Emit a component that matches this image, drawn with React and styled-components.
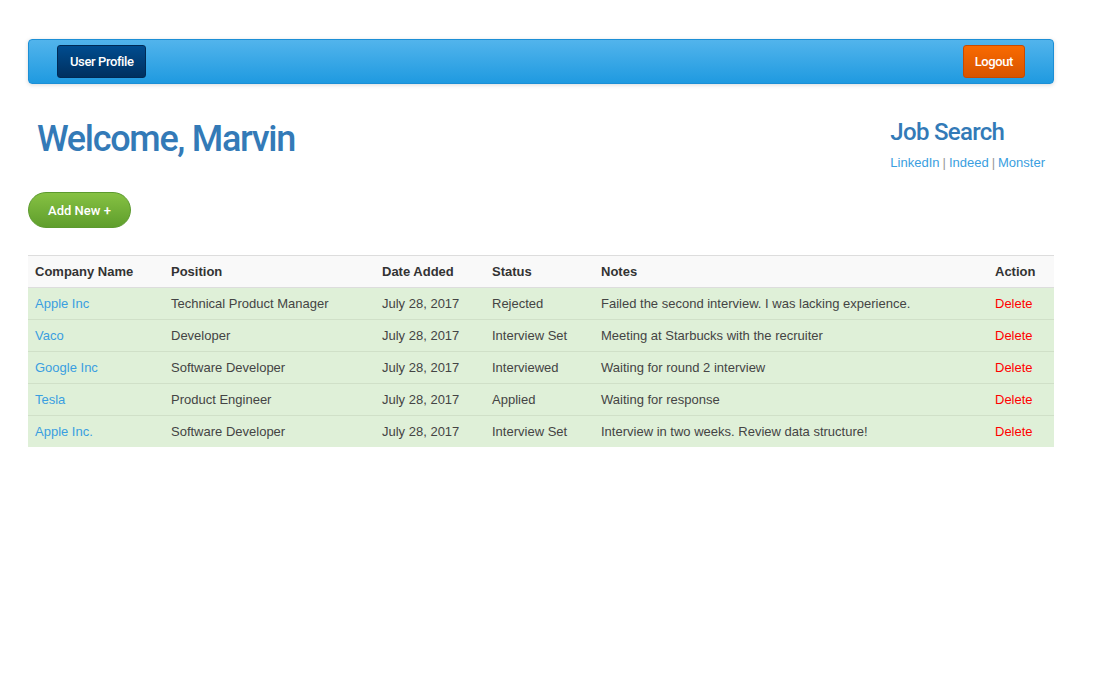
import React from 'react'
import styled, { createGlobalStyle } from 'styled-components'

const jobs = [
  { company: 'Apple Inc', position: 'Technical Product Manager', date: 'July 28, 2017', status: 'Rejected', notes: 'Failed the second interview. I was lacking experience.' },
  { company: 'Vaco', position: 'Developer', date: 'July 28, 2017', status: 'Interview Set', notes: 'Meeting at Starbucks with the recruiter' },
  { company: 'Google Inc', position: 'Software Developer', date: 'July 28, 2017', status: 'Interviewed', notes: 'Waiting for round 2 interview' },
  { company: 'Tesla', position: 'Product Engineer', date: 'July 28, 2017', status: 'Applied', notes: 'Waiting for response' },
  { company: 'Apple Inc.', position: 'Software Developer', date: 'July 28, 2017', status: 'Interview Set', notes: 'Interview in two weeks. Review data structure!' },
]

const App = () => {
  return (
    <>
      <GlobalStyle />
      <Page>
        <NavBar>
          <NavButton variant="profile">User Profile</NavButton>
          <NavButton variant="logout">Logout</NavButton>
        </NavBar>

        <Header>
          <Welcome>Welcome, Marvin</Welcome>
          <JobSearch>
            <h3>Job Search</h3>
            <Links>
              <a>LinkedIn</a>
              <Sep>|</Sep>
              <a>Indeed</a>
              <Sep>|</Sep>
              <a>Monster</a>
            </Links>
          </JobSearch>
        </Header>

        <AddButton>Add New +</AddButton>

        <Table>
          <colgroup>
            <col style={{ width: 136 }} />
            <col style={{ width: 211 }} />
            <col style={{ width: 110 }} />
            <col style={{ width: 109 }} />
            <col />
            <col style={{ width: 66 }} />
          </colgroup>
          <thead>
            <tr>
              <Th>Company Name</Th>
              <Th>Position</Th>
              <Th>Date Added</Th>
              <Th>Status</Th>
              <Th>Notes</Th>
              <Th>Action</Th>
            </tr>
          </thead>
          <tbody>
            {jobs.map((job, i) => (
              <Row key={i}>
                <Td><CompanyLink>{job.company}</CompanyLink></Td>
                <Td>{job.position}</Td>
                <Td>{job.date}</Td>
                <Td>{job.status}</Td>
                <Td>{job.notes}</Td>
                <Td><DeleteLink>Delete</DeleteLink></Td>
              </Row>
            ))}
          </tbody>
        </Table>
      </Page>
    </>
  )
}

export default App

const GlobalStyle = createGlobalStyle`
body {
  margin: 0;
  background: #fff;
  font-family: "Liberation Sans", Arial, sans-serif;
  font-size: 13px;
  color: #333;
}
`

const Page = styled.div`
width: 1026px;
margin: 39px 0 0 28px;
`

const NavBar = styled.div`
height: 45px;
box-sizing: border-box;
display: flex;
justify-content: space-between;
align-items: center;
padding: 0 28px;
border: 1px solid #1c8fd6;
border-radius: 4px;
background: linear-gradient(to bottom, #52b4ec 0%, #1f9ae0 100%);
box-shadow: 0 1px 4px rgba(0, 0, 0, 0.15);
`

const NavButton = styled.div`
height: 33px;
box-sizing: border-box;
display: flex;
align-items: center;
padding: 0 ${p => (p.variant === 'logout' ? '11px' : '12px')};
color: #fff;
font-family: Roboto, "Liberation Sans", sans-serif;
font-weight: 500;
font-size: 13px;
letter-spacing: -0.4px;
border-radius: 3px;
border: 1px solid ${p => (p.variant === 'logout' ? '#c84a00' : '#002a55')};
background: ${p => (p.variant === 'logout'
    ? 'linear-gradient(to bottom, #f96a00 0%, #d85400 100%)'
    : 'linear-gradient(to bottom, #004c8f 0%, #00305f 100%)')};
`

const Header = styled.div`
display: flex;
justify-content: space-between;
align-items: flex-start;
padding: 0 9px;
margin-top: 35px;
`

const Welcome = styled.h1`
margin: 0;
padding-top: 0;
font-family: Roboto, "Liberation Sans", sans-serif;
font-size: 36px;
font-weight: 500;
line-height: 40px;
color: #337ab7;
letter-spacing: -1.3px;
`

const JobSearch = styled.div`
h3 {
  margin: 0;
  font-family: Roboto, "Liberation Sans", sans-serif;
  font-size: 24px;
  font-weight: 500;
  line-height: 26px;
  color: #337ab7;
  letter-spacing: -0.7px;
}
`

const Links = styled.div`
margin-top: 8px;
font-size: 13px;
line-height: 20px;
color: #3a9ee0;

a {
  color: #3a9ee0;
}
`

const Sep = styled.span`
color: #999;
margin: 0 3px;
`

const AddButton = styled.div`
margin-top: 19px;
width: 103px;
height: 36px;
box-sizing: border-box;
display: flex;
align-items: center;
justify-content: center;
border-radius: 18px;
border: 1px solid #5c9a2e;
background: linear-gradient(to bottom, #86c143 0%, #5f9e2c 100%);
color: #fff;
font-family: Roboto, "Liberation Sans", sans-serif;
font-weight: 500;
font-size: 13px;
`

const Table = styled.table`
margin-top: 27px;
width: 100%;
border-collapse: collapse;
table-layout: fixed;
border-top: 1px solid #ddd;
`

const Th = styled.th`
height: 31px;
padding: 0 7px;
text-align: left;
font-size: 13px;
font-weight: bold;
color: #333;
background: #f9f9f9;
border-bottom: 1px solid #ddd;
`

const Row = styled.tr`
background: #dff0d8;
& + & td {
  border-top: 1px solid #d0e0c8;
}
`

const Td = styled.td`
height: 31px;
padding: 0 7px;
font-size: 13px;
color: #444;
white-space: nowrap;
`

const CompanyLink = styled.a`
color: #3a9ee0;
`

const DeleteLink = styled.a`
color: #ff0000;
`
